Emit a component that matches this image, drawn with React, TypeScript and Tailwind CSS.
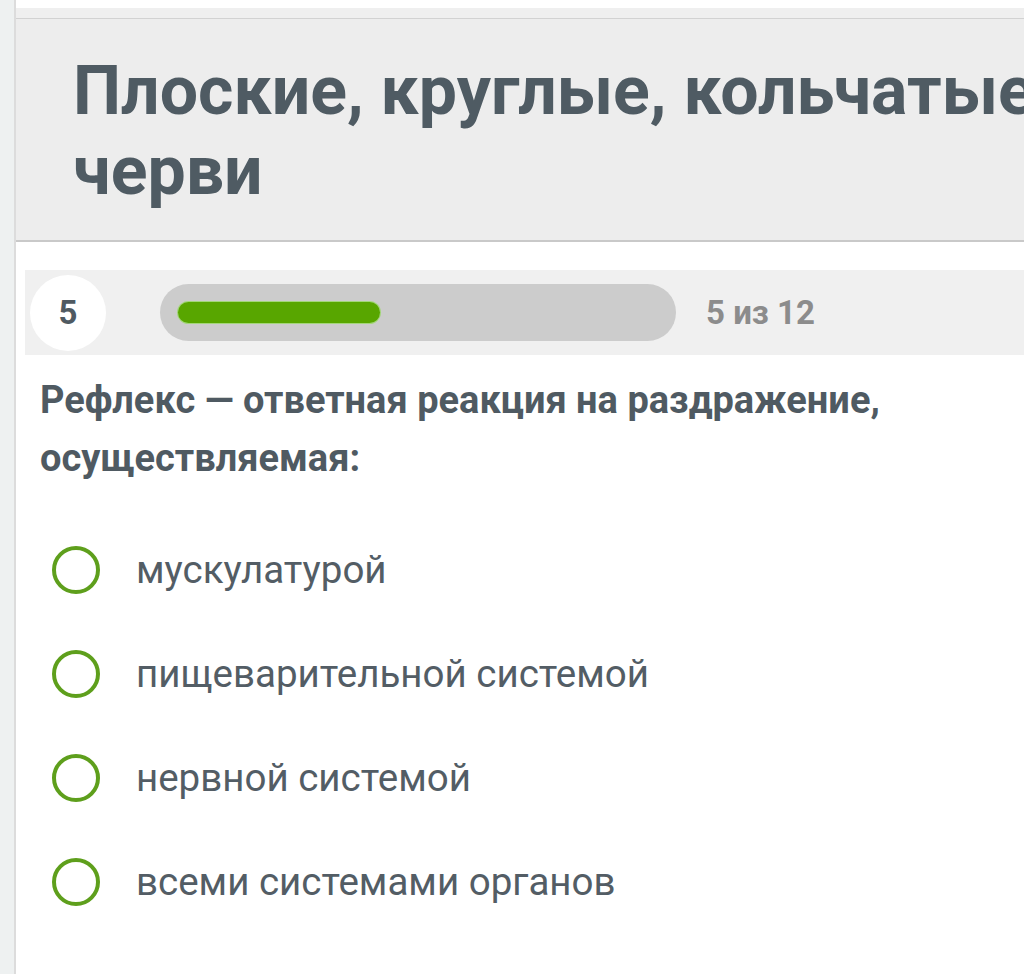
import React from "react";

const options = [
  "мускулатурой",
  "пищеварительной системой",
  "нервной системой",
  "всеми системами органов",
];

export default function App() {
  return (
    <div
      className="min-h-[974px] flex bg-white overflow-hidden"
      style={{ fontFamily: "Roboto, 'Noto Sans', sans-serif" }}
    >
      <div className="w-[16px] shrink-0 bg-[#eef1f1] border-r-2 border-[#dcdcdc]" />
      <div className="flex-1 min-w-0 overflow-hidden">
        <div className="h-[8px] bg-white" />
        <div className="h-[11px] bg-[#efefef] border-b border-[#d2d2d2]" />
        <div className="bg-[#ededed] border-b-2 border-[#c9c9c9] pl-[57px] pt-[32px] pb-[29px] overflow-hidden">
          <h1 className="text-[68px] leading-[80px] font-bold text-[#4f5b63] whitespace-nowrap">
            Плоские, круглые, кольчатые
            <br />
            черви
          </h1>
        </div>

        <div className="mt-[28px] ml-[9px] h-[85px] bg-[#f0f0f0] flex items-center pl-[5px]">
          <div className="w-[76px] h-[76px] rounded-full bg-white flex items-center justify-center text-[33px] font-bold text-[#4f5a62]">
            5
          </div>
          <div className="ml-[54px] w-[516px] h-[57px] rounded-full bg-[#cccccc] flex items-center pl-[18px]">
            <div className="w-[202px] h-[21px] rounded-full bg-[#58a600] ring-1 ring-[#a3d67a]" />
          </div>
          <div className="ml-[30px] text-[33px] font-bold text-[#8c8c8c]">5 из 12</div>
        </div>

        <div className="pl-[24px] pt-[16px] text-[38px] leading-[58px] font-bold text-[#4f5a62]">
          Рефлекс — ответная реакция на раздражение,
          <br />
          осуществляемая:
        </div>

        <div className="mt-[59px] pl-[36px] flex flex-col gap-[56px]">
          {options.map((o) => (
            <div key={o} className="flex items-center h-[48px]">
              <div className="w-[48px] h-[48px] rounded-full border-[4px] border-[#5e9f1c] shrink-0" />
              <div className="ml-[36px] text-[38.5px] text-[#535d65] whitespace-nowrap">{o}</div>
            </div>
          ))}
        </div>
      </div>
    </div>
  );
}
